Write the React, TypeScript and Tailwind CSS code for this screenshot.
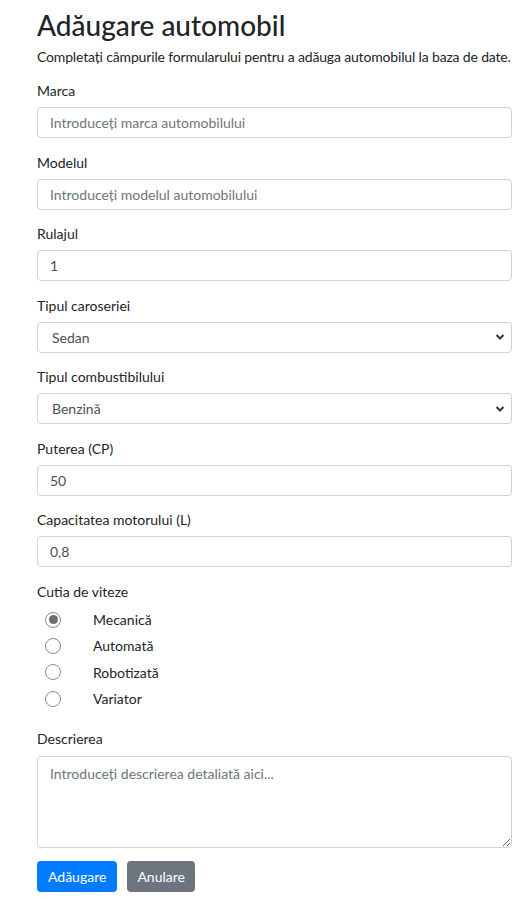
import { useState } from "react";

const fieldClass =
    "block w-full h-[31px] px-[12px] border border-[#ced4da] rounded-[4px] bg-white text-[14px] text-[#495057] placeholder:text-[#6c757d] outline-none";

const Label = ({ children }: { children: React.ReactNode }) => (
    <label className="block h-[20px] leading-[20px] mb-[6px] text-[14px] text-[#212529]">
        {children}
    </label>
);

const Chevron = () => (
    <svg
        className="absolute right-[7px] top-1/2 -translate-y-1/2 pointer-events-none"
        width="10"
        height="7"
        viewBox="0 0 10 7"
        fill="none"
        stroke="#343a40"
        strokeWidth="2"
    >
        <path d="M1.5 1.5 5 5l3.5-3.5" />
    </svg>
);

const gearboxes = ["Mecanică", "Automată", "Robotizată", "Variator"];

const App = () => {
    const [gearbox, setGearbox] = useState("Mecanică");

    return (
        <div
            className="w-[531px] min-h-[904px] bg-white pl-[37px] pr-[19px] text-[#212529]"
            style={{ fontFamily: 'Lato, "Open Sans", sans-serif' }}
        >
            {/* ================== Header ================== */}
            <h1 className="pt-[6px] h-[44px] leading-[38px] text-[28px] font-medium">
                Adăugare automobil
            </h1>
            <p className="h-[26px] leading-[26px] text-[14px] mb-[11px] whitespace-nowrap tracking-[-0.16px]">
                Completați câmpurile formularului pentru a adăuga automobilul la
                baza de date.
            </p>

            {/* ================== Marca ================== */}
            <div className="mb-[14.5px]">
                <Label>Marca</Label>
                <input
                    className={fieldClass}
                    placeholder="Introduceți marca automobilului"
                />
            </div>

            {/* ================== Modelul ================== */}
            <div className="mb-[14.5px]">
                <Label>Modelul</Label>
                <input
                    className={fieldClass}
                    placeholder="Introduceți modelul automobilului"
                />
            </div>

            {/* ================== Rulajul ================== */}
            <div className="mb-[14.5px]">
                <Label>Rulajul</Label>
                <input className={fieldClass} defaultValue="1" />
            </div>

            {/* ================== Tipul caroseriei ================== */}
            <div className="mb-[14.5px]">
                <Label>Tipul caroseriei</Label>
                <div className="relative">
                    <select
                        className={`${fieldClass} appearance-none pl-[14px]`}
                        defaultValue="Sedan"
                    >
                        <option>Sedan</option>
                        <option>Hatchback</option>
                        <option>Break</option>
                        <option>SUV</option>
                    </select>
                    <Chevron />
                </div>
            </div>

            {/* ================== Tipul combustibilului ================== */}
            <div className="mb-[14.5px]">
                <Label>Tipul combustibilului</Label>
                <div className="relative">
                    <select
                        className={`${fieldClass} appearance-none pl-[14px]`}
                        defaultValue="Benzină"
                    >
                        <option>Benzină</option>
                        <option>Motorină</option>
                        <option>Electric</option>
                        <option>Hibrid</option>
                    </select>
                    <Chevron />
                </div>
            </div>

            {/* ================== Puterea ================== */}
            <div className="mb-[14.5px]">
                <Label>Puterea (CP)</Label>
                <input className={fieldClass} defaultValue="50" />
            </div>

            {/* ================== Capacitatea ================== */}
            <div className="mb-[14.5px]">
                <Label>Capacitatea motorului (L)</Label>
                <input className={fieldClass} defaultValue="0,8" />
            </div>

            {/* ================== Cutia de viteze ================== */}
            <div className="mb-[17px]">
                <label className="block h-[20px] leading-[20px] mb-[5px] text-[14px]">
                    Cutia de viteze
                </label>
                {gearboxes.map((g) => (
                    <div
                        key={g}
                        className="flex items-center h-[26.33px] cursor-pointer"
                        onClick={() => setGearbox(g)}
                    >
                        <span className="ml-[8px] w-[16px] h-[16px] rounded-full border border-[#8a8a8a] bg-white flex items-center justify-center">
                            {gearbox === g && (
                                <span className="w-[9px] h-[9px] rounded-full bg-[#6d6d6d]" />
                            )}
                        </span>
                        <span className="ml-[32px] text-[14px]">{g}</span>
                    </div>
                ))}
            </div>

            {/* ================== Descrierea ================== */}
            <div className="mb-[13px]">
                <label className="block h-[20px] leading-[20px] mb-[7px] text-[14px]">
                    Descrierea
                </label>
                <textarea
                    className="block w-full h-[92px] px-[12px] py-[6px] border border-[#ced4da] rounded-[4px] text-[14px] text-[#495057] placeholder:text-[#6c757d] outline-none"
                    placeholder="Introduceți descrierea detaliată aici..."
                />
            </div>

            {/* ================== Actions ================== */}
            <div className="flex gap-[10px]">
                <button className="h-[31px] px-[11px] rounded-[4px] bg-[#007bff] text-white text-[14px]">
                    Adăugare
                </button>
                <button className="h-[31px] px-[10px] rounded-[4px] bg-[#6c757d] text-white text-[14px]">
                    Anulare
                </button>
            </div>
        </div>
    );
};

export default App;
